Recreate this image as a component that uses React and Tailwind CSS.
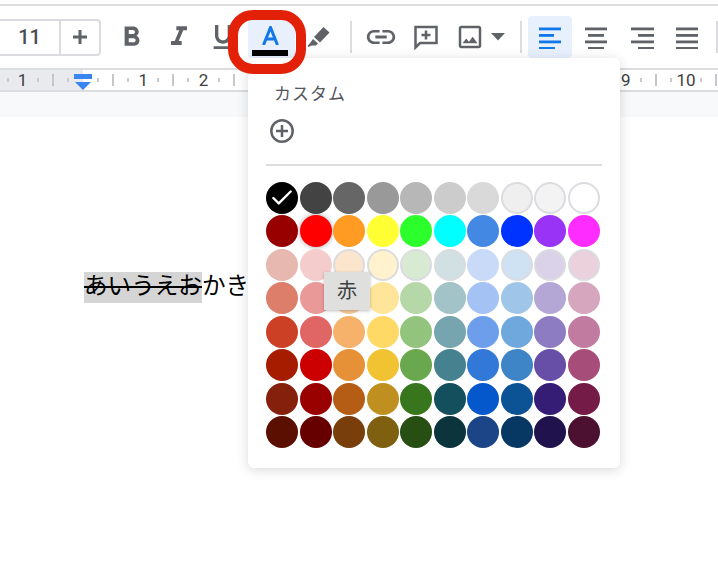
import { Check } from "lucide-react";
import { MdFormatBold, MdFormatItalic, MdFormatUnderlined, MdLink, MdOutlineImage } from "react-icons/md";

const palette = [
  ["#000000", "#434343", "#666666", "#999999", "#b7b7b7", "#cccccc", "#d9d9d9", "#efefef", "#f3f3f3", "#ffffff"],
  ["#980000", "#ff0000", "#ff9a22", "#ffff33", "#2dff2d", "#00ffff", "#4389e3", "#0033ff", "#9933f5", "#ff2cff"],
  ["#e6b8af", "#f4cccc", "#fce5cd", "#fff2cc", "#d9ead3", "#d0e0e3", "#c9daf8", "#cfe2f3", "#d9d2e9", "#ead1dc"],
  ["#dd7e6b", "#ea9999", "#f9cb9c", "#ffe599", "#b6d7a8", "#a2c4c9", "#a4c2f4", "#9fc5e8", "#b4a7d6", "#d5a6bd"],
  ["#cc4125", "#e06666", "#f6b26b", "#ffd966", "#93c47d", "#76a5af", "#6d9eeb", "#6fa8dc", "#8e7cc3", "#c27ba0"],
  ["#a61c00", "#cc0000", "#e69138", "#f1c232", "#6aa84f", "#45818e", "#3278d8", "#3d85c6", "#674ea7", "#a64d79"],
  ["#85200c", "#990000", "#b55d14", "#bf9020", "#38761d", "#134f5c", "#0458cc", "#0b5394", "#351c75", "#741b47"],
  ["#5b0f00", "#660000", "#783e0c", "#7f6010", "#274e13", "#0c343d", "#1c4587", "#073763", "#20124d", "#4c1130"],
];

const ringed = ["#efefef", "#f3f3f3", "#ffffff", "#fce5cd", "#fff2cc", "#d9ead3", "#d0e0e3", "#cfe2f3", "#d9d2e9", "#ead1dc"];

// one cell every 1/4 inch: small tick, number, small tick, long tick
const rulerCells = Array.from({ length: 48 }, (_, i) => i);

function RulerCell({ index }) {
  const kind = index % 4;
  // numbers 0 and 3-8 sit under the indent marker and the colour menu
  const hidden = index === 5 || (index > 14 && index < 40);
  return (
    <div className="flex w-[15.09px] shrink-0 items-center justify-center">
      {kind === 1 && !hidden && (
        <span className="font-['Roboto'] text-[17px] leading-[20px] text-[#3c4043]">{Math.abs((index - 1) / 4 - 1)}</span>
      )}
      {(kind === 0 || kind === 2) && <span className="h-[4px] w-[2px] shrink-0 bg-[#c8cbcf]" />}
      {kind === 3 && <span className="h-[12px] w-[2px] shrink-0 bg-[#c4c7cc]" />}
    </div>
  );
}

function AlignIcon({ lines, color }) {
  return (
    <svg width="24" height="24" viewBox="0 0 24 24" fill={color}>
      {lines.map(([x, w], i) => (
        <rect key={i} x={x} y={2.5 + i * 6.5} width={w} height="2.800" />
      ))}
    </svg>
  );
}

function Slot({ className, children }) {
  return <div className={`flex shrink-0 items-center justify-center ${className}`}>{children}</div>;
}

function Separator({ className }) {
  return <div className={`h-[32px] w-[2px] shrink-0 bg-[#dadce0] ${className}`} />;
}

export default function App() {
  return (
    <div className="relative h-[588px] w-[718px] overflow-hidden bg-white font-['Liberation_Sans','Noto_Sans_CJK_JP',sans-serif]">
      <div className="h-[4px]" />
      <div className="h-[2px] bg-[#dadce0]" />

      <div className="flex h-[62px] items-center text-[#5f6368]">
        <div className="ml-[-10px] flex h-[37px] w-[111px] shrink-0 items-center rounded-[4px] border-2 border-[#dadce0]">
          <span className="flex-1 pl-[8px] text-center font-['Roboto'] text-[20px] font-medium text-[#4a4d50]">11</span>
          <span className="flex h-full w-[40px] items-center justify-center border-l-2 border-[#dadce0]">
            <svg width="14" height="14" viewBox="0 0 14 14" fill="#5f6368"><path d="M5.500 0h3v5.500H14v3H8.500V14h-3V8.500H0v-3h5.500z" /></svg>
          </span>
        </div>

        <Slot className="ml-[7px] w-[47px]"><MdFormatBold size={33} /></Slot>
        <Slot className="w-[47px]"><MdFormatItalic size={32} /></Slot>
        <Slot className="w-[41px]"><MdFormatUnderlined size={32} /></Slot>

        <div className="ml-[5px] flex h-[42px] w-[47px] shrink-0 flex-col items-center rounded-[4px] bg-[#e8f0fe] pr-[3px] pt-[10px]">
          <svg width="17" height="19" viewBox="0 0 17 19" fill="none" stroke="#1277e8" strokeWidth="3"><path d="M1.500 19 8.500 1.500 15.500 19M4 13h9" /></svg>
          <div className="mt-[5px] h-[6px] w-[36px] bg-black" />
        </div>

        <Slot className="w-[48px]">
          <svg width="26" height="26" viewBox="0 0 26 26" fill="#5f6368"><path d="M17.500 3l6 5.500-9.500 10-6-5.500zM7 15l5 4.500-2 2H5.500l-3 1.500-1-1 3-3.500z" /></svg>
        </Slot>
        <Separator className="ml-[7px]" />

        <Slot className="w-[57px]"><MdLink size={34} /></Slot>
        <Slot className="w-[36px]">
          <svg width="28" height="26" viewBox="0 0 28 26" fill="none" stroke="#5f6368" strokeWidth="2.500"><path d="M2.500 3h21v16H7l-4.500 4.500z" /><path d="M13 6.500v9M8.500 11h9" /></svg>
        </Slot>
        <Slot className="ml-[2px] w-[46px]"><MdOutlineImage size={30} /></Slot>
        <Slot className="w-[10px]">
          <svg className="shrink-0" width="14" height="8" viewBox="0 0 14 8" fill="#5f6368"><path d="M0 0h14l-7 7.500z" /></svg>
        </Slot>
        <Separator className="ml-[17px]" />

        <Slot className="ml-[6px] h-[42px] w-[44px] rounded-[4px] bg-[#e8f0fe]">
          <AlignIcon color="#1277e8" lines={[[1, 22], [1, 15], [1, 22], [1, 16]]} />
        </Slot>
        <Slot className="w-[48px]">
          <AlignIcon color="#5f6368" lines={[[1, 22], [4, 16], [1, 22], [4, 16]]} />
        </Slot>
        <Slot className="w-[43px]">
          <AlignIcon color="#5f6368" lines={[[1, 23], [8, 16], [1, 23], [8, 16]]} />
        </Slot>
        <Slot className="w-[47px]">
          <AlignIcon color="#5f6368" lines={[[1, 22], [1, 22], [1, 22], [1, 22]]} />
        </Slot>
        <Separator className="ml-[6px]" />
      </div>

      <div className="flex h-[24px] items-center overflow-hidden border-y-2 border-[#dadce0] bg-[linear-gradient(to_right,#e8eaed_83px,#ffffff_83px)]">
        {rulerCells.map((i) => (
          <RulerCell key={i} index={i} />
        ))}
      </div>

      <div className="h-[25px] bg-[#f8f9fa]" />

      <div className="flex items-start pl-[84px] pt-[155px] text-[23.6px] leading-[28px] text-black">
        <span className="block h-[31px] bg-[#d5d5d5] line-through decoration-2">あいうえお</span>
        <span>かき</span>
      </div>

      {/* indent marker on the ruler */}
      <div className="absolute left-[74px] top-[74px] flex w-[18px] flex-col gap-[3px]">
        <div className="h-[5px] bg-[#3a86f0]" />
        <svg width="18" height="8" viewBox="0 0 18 8" fill="#3a86f0"><path d="M1 0h16l-8 8z" /></svg>
      </div>

      {/* colour menu */}
      <div className="absolute left-[248px] top-[58px] h-[410px] w-[372px] rounded-[6px] bg-white px-[18px] shadow-[0_2px_12px_rgba(60,64,67,0.2)]">
        <div className="pl-[8px] pt-[25px] text-[17px] leading-[24px] tracking-[1px] text-[#54575b]">カスタム</div>
        <svg className="ml-[4px] mt-[12px]" width="24" height="24" viewBox="0 0 24 24" fill="none" stroke="#5f6368" strokeWidth="2.500">
          <circle cx="12" cy="12" r="10.700" />
          <path d="M12 6v12M6 12h12" />
        </svg>
        <div className="mt-[21px] h-[2px] w-[336px] bg-[#dadce0]" />
        <div className="mt-[16px] grid grid-cols-[repeat(10,32px)] gap-x-[1.55px] gap-y-[1.43px]">
          {palette.flat().map((color, i) => (
            <div
              key={i}
              className={`flex h-[32px] w-[32px] items-center justify-center rounded-full ${ringed.includes(color) ? "border-2 border-[#dadce0]" : ""} ${i === 11 ? "shadow-[0_0_5px_rgba(60,64,67,0.5)]" : ""}`}
              style={{ backgroundColor: color }}
            >
              {i === 0 && <Check className="text-white" size={26} strokeWidth={2.2} />}
            </div>
          ))}
        </div>
      </div>

      <div className="absolute left-[324px] top-[272px] flex h-[38px] w-[46px] items-center justify-center bg-[#dfdfdd] text-[20px] text-[#3c4043] shadow-[0_1px_3px_rgba(0,0,0,0.25)]">赤</div>

      {/* red ring drawn over the toolbar button */}
      <div className="absolute left-[228px] top-[10px] h-[64px] w-[78px] rounded-[25px] border-[10px] border-[#e32008]" />
    </div>
  );
}
